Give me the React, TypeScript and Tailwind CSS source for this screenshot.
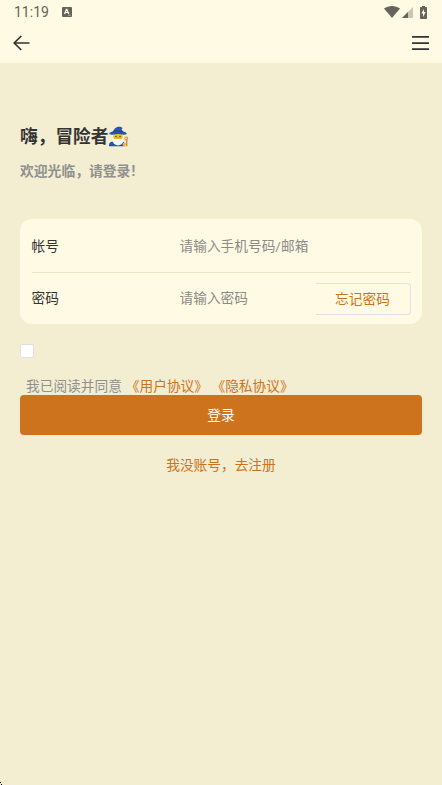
import React, { useState } from "react";

const FONT = "font-[Roboto,'Noto_Sans_CJK_SC',sans-serif]";

function StatusBar() {
  return (
    <div className="flex h-6 items-center pl-[14px] pr-[14px] text-[#66635a]">
      <span className="text-[14px] leading-6">11:19</span>
      <svg className="ml-[13px]" width="10" height="10" viewBox="0 0 10 10">
        <rect width="10" height="10" rx="1" fill="currentColor" />
        <path d="M2.500 7 4.400 2.400h.5L6.800 7M3.300 5.500H6" fill="none" stroke="#fffae3" strokeWidth="1.200" />
        <path d="M6.500 8.300h2" stroke="#fffae3" strokeWidth=".6" />
      </svg>
      <div className="ml-auto flex items-center">
        <svg width="16" height="12" viewBox="0 0 16 12" fill="currentColor">
          <path d="M0 2.600C4.500-.8 11.500-.8 16 2.600L8 12Z" />
        </svg>
        <svg className="ml-[2px]" width="11" height="11" viewBox="0 0 11 11" fill="currentColor">
          <path d="M0 11 11 0v11Z" opacity=".35" />
          <path d="M0 11 6 5v6Z" />
        </svg>
        <svg className="ml-[7px] mr-[1px]" width="7" height="13" viewBox="0 0 7 13">
          <path d="M2 0h3v1h1.200q.8 0 .8.800v10.400q0 .8-.8.800H.8q-.8 0-.8-.8V1.800Q0 1 .8 1H2Z" fill="currentColor" />
          <path d="M4 3 1.300 7.500H3v3.400l2.700-4.800H4Z" fill="#fffae3" />
        </svg>
      </div>
    </div>
  );
}

function Mage() {
  return (
    <svg width="21" height="21" viewBox="0 0 21 21">
      {/* robe and staff */}
      <path d="M1 20.300v-1.500c.3-2.200 2-3.300 4.500-3.300h8c2 0 3.200 1.100 3.500 3.300v1.500Z" fill="#2450a8" />
      <path d="M18.700 13.500v6.800" stroke="#d58a16" strokeWidth="1.300" />
      <circle cx="18.200" cy="12.600" r="1.500" fill="none" stroke="#e29a20" strokeWidth="1.100" />
      <circle cx="16.300" cy="18.500" r="1.700" fill="#f6b81d" />
      {/* beard behind the face */}
      <path d="M4 9.500h12c1.200 4.800-1.400 9.500-6 10-4.600-.5-7.200-5.200-6-10Z" fill="#f5f4f2" />
      <ellipse cx="10" cy="10.600" rx="4.900" ry="3.700" fill="#fbbd16" />
      <path d="M6 14.600q1.500-2.200 4-1.700 2.500-.5 4 1.700-2 1-4 .4-2 .6-4-.4Z" fill="#fff" />
      <circle cx="8" cy="10.500" r=".75" fill="#4b3520" />
      <circle cx="12" cy="10.500" r=".75" fill="#4b3520" />
      <ellipse cx="10" cy="12" rx="1" ry=".7" fill="#e78c00" />
      {/* hat */}
      <path d="M4.800 5.800C5.800 3.400 7.500 1.500 10 .8c2.200-.5 4 .1 4.800 1.500-1 .1-1.300.7-1.100 1.300l1.500 2.200Z" fill="#2a52b4" />
      <path d="M4.600 5.600q5.400-1.200 10.800 0c2 .5 3.300 1.400 3.300 2.200 0 .9-2.600 1.100-4.300.7q-4.400-1-8.800 0c-1.700.4-4.300.2-4.300-.7 0-.8 1.300-1.700 3.300-2.200Z" fill="#2a52b4" />
      <path d="M4.800 5.800q5.200-1.300 10.400 0" fill="none" stroke="#173b8d" strokeWidth=".8" />
    </svg>
  );
}

export default function App() {
  const [agreed, setAgreed] = useState(false);

  return (
    <div className={`relative flex h-[785px] w-full flex-col overflow-hidden bg-[#f3edd1] text-[13.7px] text-[#333] ${FONT}`}>
      <header className="h-[63px] shrink-0 bg-[#fffae3]">
        <StatusBar />
        <div className="flex h-[38px] items-center justify-between pl-[13px] pr-[13px]">
          <button aria-label="返回">
            <svg width="17" height="16" viewBox="0 0 17 16" fill="none" stroke="#333" strokeWidth="1.700">
              <path d="M16.500 8H1M8.300 1 1.200 8l7.100 7" />
            </svg>
          </button>
          <button aria-label="菜单">
            <svg width="17" height="14" viewBox="0 0 17 14" fill="#333">
              <path d="M0 0h17v1.700H0ZM0 6.200h17v1.700H0ZM0 12.300h17V14H0Z" />
            </svg>
          </button>
        </div>
      </header>

      <main className="px-5 pt-[60px]">
        <h1 className="flex h-[26px] items-center text-[17.7px] font-bold leading-[26px]">
          <span className="pt-px">嗨，冒险者</span>
          <Mage />
        </h1>
        <p className="mt-[12px] h-5 text-[13.8px] font-bold leading-5 text-[#909090]">
          欢迎光临，请登录<span className="ml-px">!</span>
        </p>

        <section className="mt-[38.4px] h-[104.6px] rounded-[12px] bg-[#fffae3] px-[11.5px]">
          <div className="flex h-[53.5px] items-center border-b border-[#ebe3c1]">
            <label htmlFor="account" className="w-[148px] shrink-0 pt-px">帐号</label>
            <input
              id="account"
              className="min-w-0 flex-1 bg-transparent pt-px outline-none placeholder:text-[#8c8b87]"
              placeholder="请输入手机号码/邮箱"
            />
          </div>
          <div className="flex h-[51px] items-center">
            <label htmlFor="password" className="w-[148px] shrink-0">密码</label>
            <input
              id="password"
              type="password"
              className="min-w-0 flex-1 bg-transparent outline-none placeholder:text-[#8c8b87]"
              placeholder="请输入密码"
            />
            <button className="mt-px h-8 w-[95px] rounded-r-[4px] border border-l-0 border-[#dfe1e7] text-[#cd731d]">
              忘记密码
            </button>
          </div>
        </section>

        <div className="mt-[20.4px] flex h-[14px]">
          <input
            type="checkbox"
            aria-label="同意协议"
            checked={agreed}
            onChange={(e) => setAgreed(e.target.checked)}
            className="size-[13.5px] appearance-none rounded-[2px] border border-[#dfe1e7] bg-white checked:bg-[#cd731d]"
          />
        </div>
        <p className="mt-[18px] flex h-[19px] items-center whitespace-nowrap pl-[6px] pt-[1.5px] leading-[19px] text-[#909090]">
          <span>我已阅读并同意</span>
          <a className="ml-[4px] text-[#cd731d]">《用户协议》</a>
          <a className="ml-[3.5px] text-[#cd731d]">《隐私协议》</a>
        </p>
        <button className="block h-[39.6px] w-full rounded-[4px] bg-[#cd731d] text-white">登录</button>
        <div className="mt-[20px] text-center leading-5 text-[#cd731d]">我没账号，去注册</div>
      </main>

      <svg className="absolute bottom-0 left-0" width="2" height="4" viewBox="0 0 2 4">
        <path d="M0 1h1v1H0ZM1 3h1v1H1Z" fill="#000" />
      </svg>
    </div>
  );
}
